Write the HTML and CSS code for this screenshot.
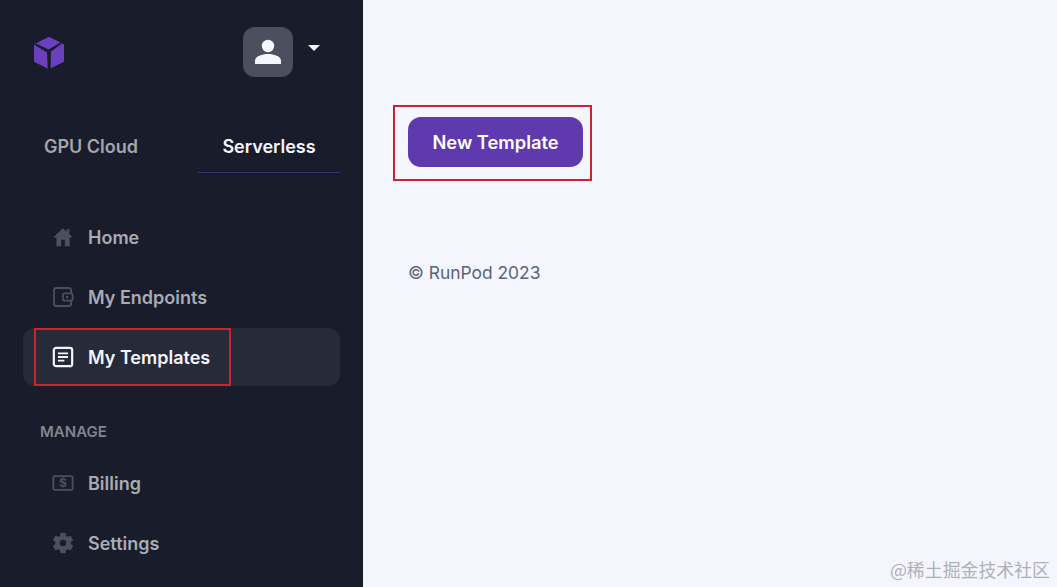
FILE: index.html
```html
<!DOCTYPE html>
<html lang="en">
<head>
    <meta charset="UTF-8">
    <meta name="viewport" content="width=device-width, initial-scale=1.0">
    <title>RunPod - My Templates</title>
    <link rel="stylesheet" href="styles.css">
</head>
<body>
    <div class="layout">
        <aside class="sidebar">
            <div class="top-row">
                <svg class="logo" viewBox="0 0 32 33" width="32" height="33">
                    <path fill="#6a3fc0" stroke="#6a3fc0" stroke-width="2" stroke-linejoin="round" d="M16 2 L30 9 L30 25 L16 32 L2 25 L2 9 Z"/>
                    <path fill="#181c2b" d="M1 8.5 L3 7.5 L15.5 13.5 L27.5 6.5 L29 7.5 L18 15.5 L17.6 33 L14.8 33 L14 16.5 Z"/>
                </svg>
                <div class="account">
                    <div class="avatar">
                        <svg viewBox="0 0 26 26" width="26" height="26">
                            <circle cx="13" cy="7" r="6.2" fill="#f5f5fd"/>
                            <path fill="#f5f5fd" d="M0 22 C0 17 7 15 13 15 C19 15 26 17 26 22 L26 25 L0 25 Z"/>
                        </svg>
                    </div>
                    <span class="caret"></span>
                </div>
            </div>

            <div class="tabs">
                <div class="tab">GPU Cloud</div>
                <div class="tab active">Serverless</div>
            </div>

            <nav class="nav">
                <a class="nav-item">
                    <svg class="nav-icon" viewBox="0 0 24 24"><path fill="#4b4f5e" d="M10 22v-7h4v7h5.2v-9.5H22.8L19 9V3.500h-3V6.300L12 2.500 1.200 12.500h3.600V22z"/></svg>
                    <span>Home</span>
                </a>
                <a class="nav-item">
                    <svg class="nav-icon" viewBox="0 0 24 24"><rect x="2.2" y="2.2" width="18.6" height="19.6" rx="2.5" fill="none" stroke="#4b4f5e" stroke-width="2"/><rect x="12" y="8" width="10.5" height="8" rx="1.5" fill="#181c2b" stroke="#4b4f5e" stroke-width="2"/><circle cx="16.5" cy="12" r="1.5" fill="#4b4f5e"/></svg>
                    <span>My Endpoints</span>
                </a>
                <div class="nav-active-row">
                    <a class="nav-item current">
                        <svg class="nav-icon" viewBox="0 0 24 24"><rect x="2" y="2" width="20" height="20" rx="2.5" fill="none" stroke="#f5f5fd" stroke-width="2.4"/><path stroke="#f5f5fd" stroke-width="2" d="M6.5 8h11M6.5 12h11M6.5 16h7"/></svg>
                        <span>My Templates</span>
                    </a>
                </div>
            </nav>

            <div class="nav-heading">MANAGE</div>

            <nav class="nav">
                <a class="nav-item">
                    <svg class="nav-icon" viewBox="0 0 24 24"><rect x="1.5" y="4.5" width="21" height="15" rx="1.5" fill="none" stroke="#4b4f5e" stroke-width="2"/><text class="dollar" x="12" y="16.5" text-anchor="middle">$</text></svg>
                    <span>Billing</span>
                </a>
                <a class="nav-item">
                    <svg class="nav-icon" viewBox="0 0 24 24"><path fill="#4b4f5e" fill-rule="evenodd" d="M19.4 13a7.6 7.6 0 0 0 0-2l2.4-1.9a.6.6 0 0 0 .1-.7l-2.3-3.9a.6.6 0 0 0-.7-.3l-2.8 1.1a8 8 0 0 0-1.8-1l-.4-3a.6.6 0 0 0-.6-.5H8.7a.6.6 0 0 0-.6.5l-.4 3a8 8 0 0 0-1.8 1L3.1 4.2a.6.6 0 0 0-.7.3L.1 8.4a.6.6 0 0 0 .1.7L2.6 11a7.6 7.6 0 0 0 0 2L.2 14.9a.6.6 0 0 0-.1.7l2.3 3.9a.6.6 0 0 0 .7.3l2.8-1.1a8 8 0 0 0 1.8 1l.4 3a.6.6 0 0 0 .6.5h4.6a.6.6 0 0 0 .6-.5l.4-3a8 8 0 0 0 1.8-1l2.8 1.1a.6.6 0 0 0 .7-.3l2.3-3.9a.6.6 0 0 0-.1-.7zM11 15.5a3.5 3.5 0 1 1 0-7 3.5 3.5 0 0 1 0 7z" transform="translate(1 0)"/></svg>
                    <span>Settings</span>
                </a>
            </nav>
        </aside>

        <main class="content">
            <div class="button-outline">
                <button class="new-button">New Template</button>
            </div>
            <p class="copyright">© RunPod 2023</p>
        </main>
    </div>

    <div class="watermark">@稀土掘金技术社区</div>
</body>
</html>
```

FILE: styles.css
```css
html, body {
    margin: 0;
    height: 100%;
    overflow: hidden;
}
body {
    font-family: Inter, "Liberation Sans", sans-serif;
    background-color: #f5f5fd;
}
.layout {
    display: flex;
    height: 587px;
}
.sidebar {
    width: 363px;
    flex-shrink: 0;
    box-sizing: border-box;
    background: #181c2b;
    padding-top: 27px;
}
.top-row {
    display: flex;
    justify-content: space-between;
    padding: 0 43px 0 33px;
}
.logo {
    margin-top: 9px;
}
.account {
    display: flex;
    gap: 15px;
}
.avatar {
    width: 50px;
    height: 50px;
    border-radius: 12px;
    background: #4b4f5e;
    display: flex;
    align-items: center;
    justify-content: center;
}
.caret {
    margin-top: 18px;
    width: 0;
    height: 0;
    border-left: 6px solid transparent;
    border-right: 6px solid transparent;
    border-top: 6px solid #f5f5fd;
}
.tabs {
    display: grid;
    grid-template-columns: 142px 142px;
    gap: 36px;
    margin: 49px 0 0 20px;
}
.tab {
    height: 47px;
    padding-top: 11px;
    box-sizing: border-box;
    text-align: center;
    font-size: 18px;
    line-height: 20px;
    font-weight: 600;
    color: #a4a6ad;
}
.tab.active {
    color: #f5f5fd;
    border-bottom: 1px solid #3b2f73;
}
.nav {
    display: flex;
    flex-direction: column;
}
.sidebar > .nav:first-of-type {
    margin-top: 34px;
}
.nav-item {
    display: flex;
    align-items: center;
    gap: 14px;
    height: 60px;
    padding-left: 52px;
    box-sizing: border-box;
    font-size: 18px;
    font-weight: 600;
    color: #a9abb5;
}
.nav-icon {
    width: 22px;
    height: 22px;
    flex-shrink: 0;
}
.nav-active-row {
    margin: 1px 23px 0;
    height: 58px;
    background: #272a39;
    border-radius: 12px;
    padding-left: 11px;
}
.nav-item.current {
    display: inline-flex;
    height: 58px;
    width: 197px;
    padding-left: 16px;
    color: #f5f5fd;
    border: 2px solid #c9252b;
}
.nav-heading {
    margin: 37px 0 13px 40px;
    font-size: 15px;
    line-height: 17px;
    font-weight: 600;
    color: #83858f;
}
.dollar {
    font-family: Inter, sans-serif;
    font-size: 13px;
    font-weight: 700;
    fill: #4b4f5e;
}
.content {
    flex: 1;
    padding: 105px 0 0 30px;
}
.button-outline {
    box-sizing: border-box;
    width: 199px;
    height: 76px;
    border: 2px solid #c9252b;
    padding: 10px 0 0 13px;
}
.new-button {
    width: 175px;
    height: 50px;
    border: none;
    border-radius: 13px;
    background: #5f39ae;
    color: #fff;
    font-family: inherit;
    font-size: 18.3px;
    font-weight: 600;
}
.copyright {
    margin: 81px 0 0 15px;
    font-size: 17.4px;
    line-height: 22px;
    color: #5b6478;
}
.watermark {
    position: absolute;
    right: 7px;
    bottom: 7px;
    font-family: "Noto Sans CJK SC", sans-serif;
    font-size: 17.9px;
    line-height: 22px;
    color: #b0b0b9;
}
```
